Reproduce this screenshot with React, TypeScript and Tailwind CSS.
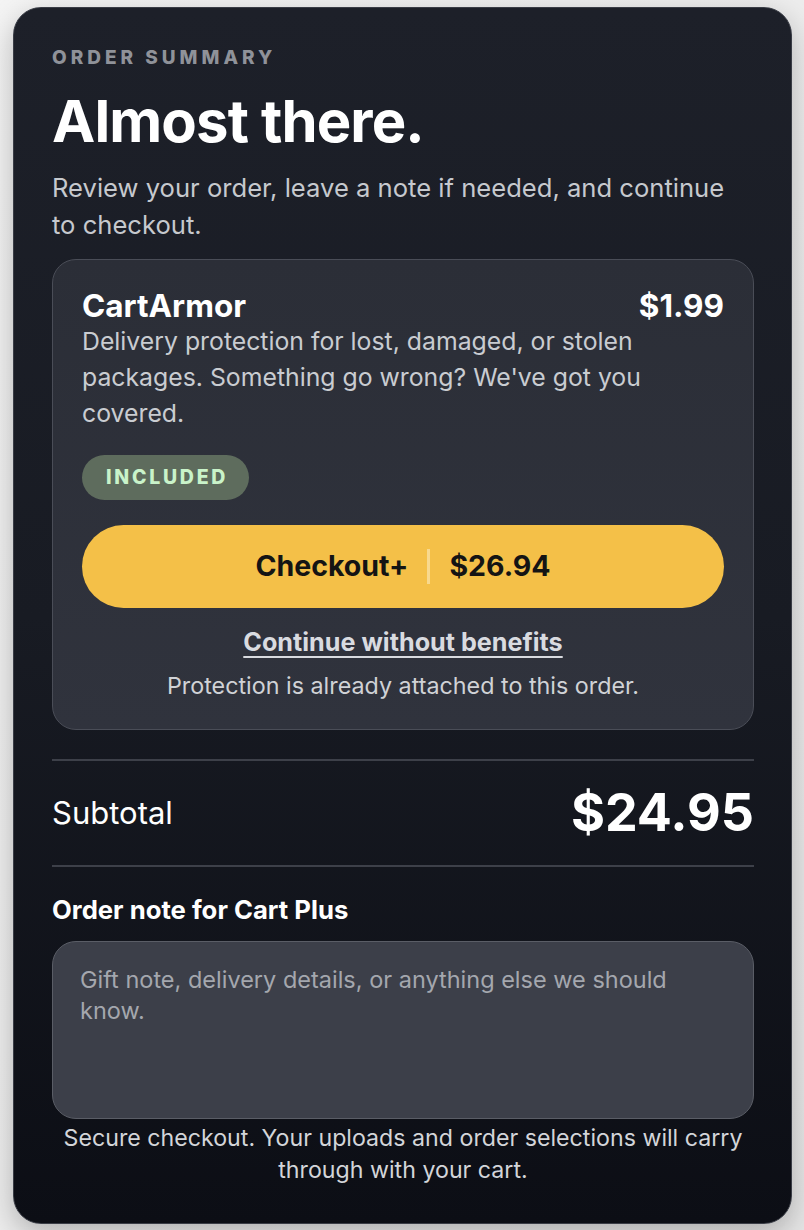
export default function App() {
  return (
    <div className="min-h-screen bg-gradient-to-br from-[#f4f4f4] to-[#e6e6e6] pl-[13px] pr-[12px] pt-[7px] pb-[6px] font-['Inter',sans-serif]">
      <div className="rounded-[28px] border border-[#3a3d46] bg-gradient-to-b from-[#1d2029] via-[#181b23] to-[#0c0e15] pl-[38px] pr-[37px] pt-[40px] pb-[37px] shadow-[0_10px_30px_rgba(0,0,0,0.25)]">
        <p className="text-[19px] leading-[19px] font-extrabold tracking-[0.21em] text-[#8f9299]">ORDER SUMMARY</p>
        <h1 className="mt-[22px] text-[58px] leading-[64px] font-bold tracking-[-0.015em] text-white">Almost there.</h1>
        <p className="mt-[16px] max-w-[686px] text-[25.6px] leading-[37px] text-[#c6c9ce]">
          Review your order, leave a note if needed, and continue to checkout.
        </p>

        <div className="mt-[16px] rounded-[24px] border-[1.5px] border-[#4a4d57] bg-gradient-to-b from-[#2b2e37] to-[#30333d] px-[29px] pt-[29px] pb-[28px]">
          <div className="flex items-center justify-between text-[31.5px] leading-[34px] font-bold text-white">
            <span>CartArmor</span>
            <span>$1.99</span>
          </div>
          <p className="text-[24.8px] leading-[36px] text-[#c9ccd1]">
            Delivery protection for lost, damaged, or stolen packages. Something go wrong? We've got you covered.
          </p>
          <div className="mt-[24px] flex h-[45px] w-fit items-center rounded-full bg-[#5e6c5d] pl-[24px] pr-[21px] text-[19.5px] font-extrabold tracking-[0.14em] text-[#c9f3c9]">
            INCLUDED
          </div>
          <button className="mt-[25px] flex h-[83px] w-full items-center justify-center rounded-full bg-[#f4c048] text-[28.5px] font-bold text-[#141414]">
            <span>Checkout+</span>
            <span className="mx-[19px] h-[35px] w-[3px] bg-[#f8d98e]" />
            <span>$26.94</span>
          </button>
          <div className="mt-[19px] text-center">
            <a className="text-[25.2px] leading-[30px] font-bold text-[#d9dbe0] underline underline-offset-[5px] decoration-[2px]">
              Continue without benefits
            </a>
          </div>
          <p className="mt-[14px] text-center text-[23.3px] leading-[30px] text-[#d0d2d6]">
            Protection is already attached to this order.
          </p>
        </div>

        <div className="mt-[29px] flex items-center justify-between border-y-2 border-[#3d4049] py-[23px]">
          <span className="text-[31px] text-white">Subtotal</span>
          <span className="text-[52px] leading-[58px] font-bold text-white">$24.95</span>
        </div>

        <label className="mt-[28px] block text-[25.7px] leading-[30px] font-bold text-white">Order note for Cart Plus</label>
        <textarea
          placeholder="Gift note, delivery details, or anything else we should know."
          className="mt-[16px] block h-[178px] w-full resize-none rounded-[24px] border-[1.5px] border-[#5a5d66] bg-[#3c3f49] pl-[27px] pr-[40px] py-[22px] text-[23.5px] leading-[31px] text-white placeholder:text-[#a4a7ae] outline-none"
        />
        <p className="mt-[3px] text-center text-[23.2px] leading-[32px] text-[#d3d5d9]">
          Secure checkout. Your uploads and order selections will carry through with your cart.
        </p>
      </div>
    </div>
  );
}
